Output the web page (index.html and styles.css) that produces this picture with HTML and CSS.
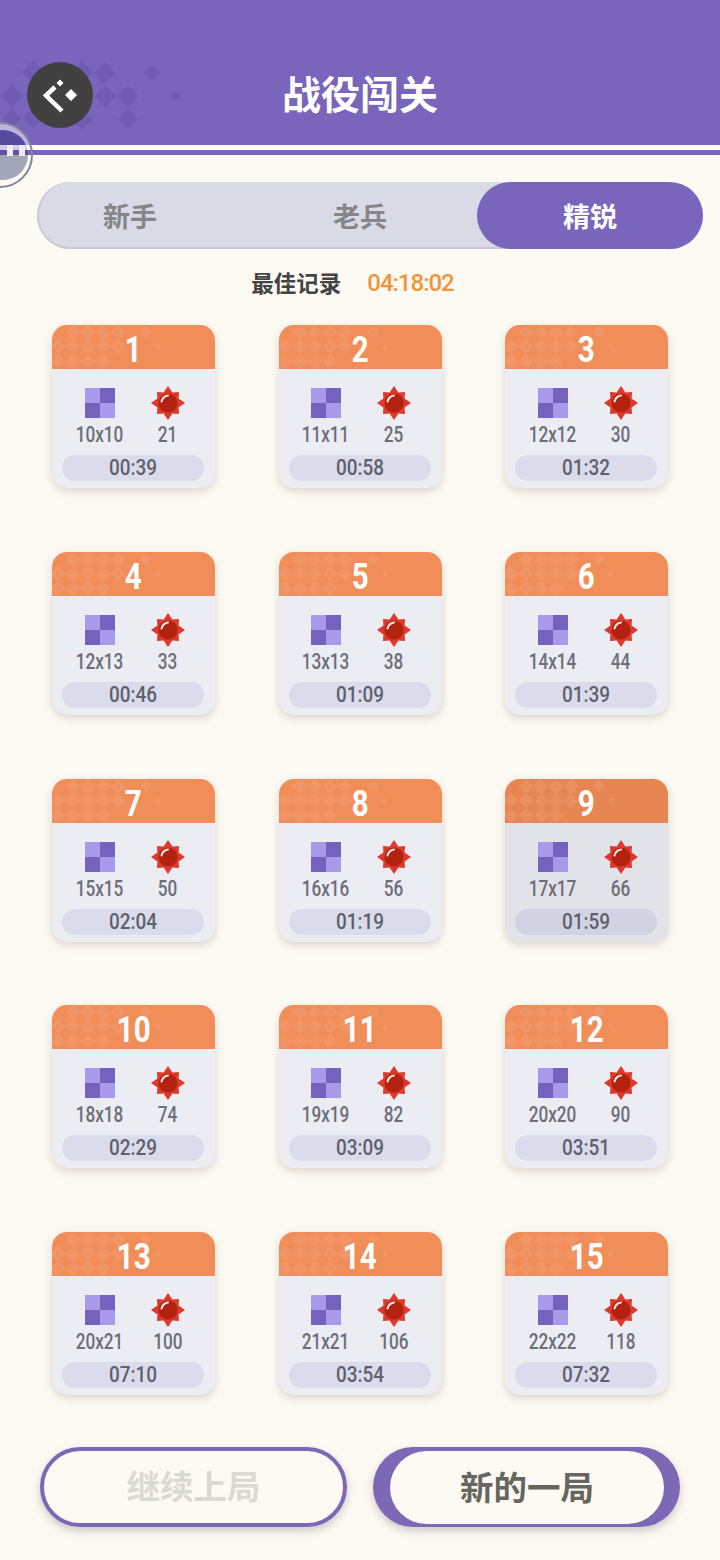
FILE: index.html
```html
<!DOCTYPE html>
<html lang="zh-CN">
<head>
    <meta charset="UTF-8">
    <meta name="viewport" content="width=device-width, initial-scale=1.0">
    <title>战役闯关</title>
    <link rel="stylesheet" href="styles.css">
</head>
<body>
    <svg class="defs" width="0" height="0">
        <symbol id="tile" viewBox="0 0 30 30">
            <rect width="30" height="30" fill="#a999ea"/>
            <rect x="15" width="15" height="15" fill="#7562bd"/>
            <rect y="15" width="15" height="15" fill="#7562bd"/>
        </symbol>
        <symbol id="mine" viewBox="0 0 34 34">
            <path d="M17 0L21.400 6.400 28 6 27.600 12.600 34 17 27.600 21.400 28 28 21.400 27.600 17 34 12.600 27.600 6 28 6.400 21.400 0 17 6.400 12.600 6 6 12.600 6.400z" fill="#dc3a2c"/>
            <circle cx="17" cy="17" r="9.500" fill="#b3210f"/>
            <path d="M10.500 15.500c.8-3 3.200-5.500 6.500-6" fill="none" stroke="#fff" stroke-opacity=".9" stroke-width="2" stroke-linecap="round"/>
        </symbol>
        <symbol id="dots" viewBox="0 0 163 44">
            <g fill="#fff" fill-opacity=".08">
                <path d="M21 0l7.500 7.500L21 15l-7.500-7.500zM36 0l7.500 7.500L36 15l-7.500-7.500zM51 0l7.500 7.500L51 15l-7.500-7.500zM66 0l7.500 7.500L66 15l-7.500-7.500zM94 1l6 6-6 6-6-6z"/>
                <path d="M6 14l7.500 7.500L6 29l-7.500-7.500zM21 14l7.500 7.500L21 29l-7.500-7.500zM36 14l7.500 7.500L36 29l-7.500-7.500zM51 14l7.500 7.500L51 29l-7.500-7.500zM66 14l7.500 7.500L66 29l-7.500-7.500z"/>
                <path d="M6 29l7.500 7.500L6 44l-7.500-7.500zM21 29l7.500 7.500L21 44l-7.500-7.500zM36 29l7.500 7.500L36 44l-7.500-7.500zM51 29l7.500 7.500L51 44l-7.500-7.500z"/>
                <path d="M106 19l3 3-3 3-3-3z"/>
            </g>
        </symbol>
    </svg>

    <header class="topbar">
        <svg class="topbar-dots" width="200" height="145" viewBox="0 0 200 145">
            <g fill="#705cb2">
                <path d="M33 61l11 11-11 11-11-11zM82 61l11 11-11 11-11-11zM105 62l11 11-11 11-11-11zM152 65l8 8-8 8-8-8z"/>
                <path d="M12 85l11 11-11 11-11-11zM105 85l11 11-11 11-11-11zM128 85l11 11-11 11-11-11zM175 91l5 5-5 5-5-5z"/>
                <path d="M12 108l10 10-10 10-10-10zM33 108l10 10-10 10-10-10zM82 110l10 10-10 10-10-10zM128 109l10 10-10 10-10-10z"/>
            </g>
        </svg>
        <button class="back-btn" type="button">
            <svg width="66" height="66" viewBox="0 0 66 66">
                <path d="M28 25l-9 8.500L35 49" fill="none" stroke="#fff" stroke-width="4.500"/>
                <path d="M33 17.500l3.500 3.500-3.500 3.500-3.500-3.500zM44 27l6 6-6 6-6-6z" fill="#fff"/>
            </svg>
        </button>
        <h1 class="title">战役闯关</h1>
    </header>
    <div class="topbar-rule"></div>

    <div class="float-ball">
        <span class="float-ball-core"></span>
        <span class="float-ball-marks"><i></i><i></i></span>
    </div>

    <main class="content">
        <nav class="tabs">
            <a class="tab">新手</a>
            <a class="tab">老兵</a>
            <a class="tab active">精锐</a>
        </nav>

        <p class="best"><span class="best-label">最佳记录</span><span class="best-time">04:18:02</span></p>

        <section class="levels">
            <article class="level">
                <div class="level-head"><svg class="level-dots"><use href="#dots"/></svg><span>1</span></div>
                <div class="level-stats">
                    <div class="stat"><svg class="stat-tile"><use href="#tile"/></svg><span>10x10</span></div>
                    <div class="stat"><svg class="stat-mine"><use href="#mine"/></svg><span>21</span></div>
                </div>
                <div class="level-time"><span>00:39</span></div>
            </article>
            <article class="level">
                <div class="level-head"><svg class="level-dots"><use href="#dots"/></svg><span>2</span></div>
                <div class="level-stats">
                    <div class="stat"><svg class="stat-tile"><use href="#tile"/></svg><span>11x11</span></div>
                    <div class="stat"><svg class="stat-mine"><use href="#mine"/></svg><span>25</span></div>
                </div>
                <div class="level-time"><span>00:58</span></div>
            </article>
            <article class="level">
                <div class="level-head"><svg class="level-dots"><use href="#dots"/></svg><span>3</span></div>
                <div class="level-stats">
                    <div class="stat"><svg class="stat-tile"><use href="#tile"/></svg><span>12x12</span></div>
                    <div class="stat"><svg class="stat-mine"><use href="#mine"/></svg><span>30</span></div>
                </div>
                <div class="level-time"><span>01:32</span></div>
            </article>
            <article class="level">
                <div class="level-head"><svg class="level-dots"><use href="#dots"/></svg><span>4</span></div>
                <div class="level-stats">
                    <div class="stat"><svg class="stat-tile"><use href="#tile"/></svg><span>12x13</span></div>
                    <div class="stat"><svg class="stat-mine"><use href="#mine"/></svg><span>33</span></div>
                </div>
                <div class="level-time"><span>00:46</span></div>
            </article>
            <article class="level">
                <div class="level-head"><svg class="level-dots"><use href="#dots"/></svg><span>5</span></div>
                <div class="level-stats">
                    <div class="stat"><svg class="stat-tile"><use href="#tile"/></svg><span>13x13</span></div>
                    <div class="stat"><svg class="stat-mine"><use href="#mine"/></svg><span>38</span></div>
                </div>
                <div class="level-time"><span>01:09</span></div>
            </article>
            <article class="level">
                <div class="level-head"><svg class="level-dots"><use href="#dots"/></svg><span>6</span></div>
                <div class="level-stats">
                    <div class="stat"><svg class="stat-tile"><use href="#tile"/></svg><span>14x14</span></div>
                    <div class="stat"><svg class="stat-mine"><use href="#mine"/></svg><span>44</span></div>
                </div>
                <div class="level-time"><span>01:39</span></div>
            </article>
            <article class="level">
                <div class="level-head"><svg class="level-dots"><use href="#dots"/></svg><span>7</span></div>
                <div class="level-stats">
                    <div class="stat"><svg class="stat-tile"><use href="#tile"/></svg><span>15x15</span></div>
                    <div class="stat"><svg class="stat-mine"><use href="#mine"/></svg><span>50</span></div>
                </div>
                <div class="level-time"><span>02:04</span></div>
            </article>
            <article class="level">
                <div class="level-head"><svg class="level-dots"><use href="#dots"/></svg><span>8</span></div>
                <div class="level-stats">
                    <div class="stat"><svg class="stat-tile"><use href="#tile"/></svg><span>16x16</span></div>
                    <div class="stat"><svg class="stat-mine"><use href="#mine"/></svg><span>56</span></div>
                </div>
                <div class="level-time"><span>01:19</span></div>
            </article>
            <article class="level pressed">
                <div class="level-head"><svg class="level-dots"><use href="#dots"/></svg><span>9</span></div>
                <div class="level-stats">
                    <div class="stat"><svg class="stat-tile"><use href="#tile"/></svg><span>17x17</span></div>
                    <div class="stat"><svg class="stat-mine"><use href="#mine"/></svg><span>66</span></div>
                </div>
                <div class="level-time"><span>01:59</span></div>
            </article>
            <article class="level">
                <div class="level-head"><svg class="level-dots"><use href="#dots"/></svg><span>10</span></div>
                <div class="level-stats">
                    <div class="stat"><svg class="stat-tile"><use href="#tile"/></svg><span>18x18</span></div>
                    <div class="stat"><svg class="stat-mine"><use href="#mine"/></svg><span>74</span></div>
                </div>
                <div class="level-time"><span>02:29</span></div>
            </article>
            <article class="level">
                <div class="level-head"><svg class="level-dots"><use href="#dots"/></svg><span>11</span></div>
                <div class="level-stats">
                    <div class="stat"><svg class="stat-tile"><use href="#tile"/></svg><span>19x19</span></div>
                    <div class="stat"><svg class="stat-mine"><use href="#mine"/></svg><span>82</span></div>
                </div>
                <div class="level-time"><span>03:09</span></div>
            </article>
            <article class="level">
                <div class="level-head"><svg class="level-dots"><use href="#dots"/></svg><span>12</span></div>
                <div class="level-stats">
                    <div class="stat"><svg class="stat-tile"><use href="#tile"/></svg><span>20x20</span></div>
                    <div class="stat"><svg class="stat-mine"><use href="#mine"/></svg><span>90</span></div>
                </div>
                <div class="level-time"><span>03:51</span></div>
            </article>
            <article class="level">
                <div class="level-head"><svg class="level-dots"><use href="#dots"/></svg><span>13</span></div>
                <div class="level-stats">
                    <div class="stat"><svg class="stat-tile"><use href="#tile"/></svg><span>20x21</span></div>
                    <div class="stat"><svg class="stat-mine"><use href="#mine"/></svg><span>100</span></div>
                </div>
                <div class="level-time"><span>07:10</span></div>
            </article>
            <article class="level">
                <div class="level-head"><svg class="level-dots"><use href="#dots"/></svg><span>14</span></div>
                <div class="level-stats">
                    <div class="stat"><svg class="stat-tile"><use href="#tile"/></svg><span>21x21</span></div>
                    <div class="stat"><svg class="stat-mine"><use href="#mine"/></svg><span>106</span></div>
                </div>
                <div class="level-time"><span>03:54</span></div>
            </article>
            <article class="level">
                <div class="level-head"><svg class="level-dots"><use href="#dots"/></svg><span>15</span></div>
                <div class="level-stats">
                    <div class="stat"><svg class="stat-tile"><use href="#tile"/></svg><span>22x22</span></div>
                    <div class="stat"><svg class="stat-mine"><use href="#mine"/></svg><span>118</span></div>
                </div>
                <div class="level-time"><span>07:32</span></div>
            </article>
        </section>

        <div class="actions">
            <button class="btn btn-continue" type="button">继续上局</button>
            <button class="btn btn-new" type="button"><span>新的一局</span></button>
        </div>
    </main>
</body>
</html>
```

FILE: styles.css
```css
* {
    box-sizing: border-box;
}
html, body {
    margin: 0;
    padding: 0;
}
body {
    position: relative;
    width: 720px;
    height: 1560px;
    overflow: hidden;
    background-color: #fdfaf3;
    font-family: Roboto, "Noto Sans CJK SC", sans-serif;
}
.defs {
    position: absolute;
}

/* top bar */
.topbar {
    position: relative;
    display: grid;
    grid-template-columns: 66px 1fr 66px;
    align-items: center;
    height: 145px;
    padding: 62px 27px 17px;
    background-color: #7965bb;
}
.topbar-dots {
    position: absolute;
    left: 0;
    top: 0;
}
.back-btn {
    position: relative;
    width: 66px;
    height: 66px;
    padding: 0;
    border: none;
    border-radius: 50%;
    background-color: #414141;
}
.back-btn svg {
    display: block;
}
.title {
    margin: 0 0 6px;
    color: #fff;
    font-family: "Noto Sans CJK SC", sans-serif;
    font-size: 39px;
    font-weight: 700;
    line-height: 60px;
    text-align: center;
}
.topbar-rule {
    height: 10px;
    border-top: 5px solid #fff;
    background-color: #7965bb;
}

/* floating ball on the left edge */
.float-ball {
    position: absolute;
    left: -33px;
    top: 122px;
    width: 66px;
    height: 66px;
    border: 2px solid #85859a;
    border-radius: 50%;
    background: linear-gradient(#bdb3e2 0 21px, transparent 21px);
}
.float-ball-core {
    position: absolute;
    left: 9px;
    top: 6px;
    width: 50px;
    height: 50px;
    border-radius: 50%;
    background: linear-gradient(#544a9e 0 15px, #cfcbe6 15px 20px, #5f50a2 20px 25px, #a3a6b6 25px);
}
.float-ball-marks {
    position: absolute;
    left: 38px;
    top: 21px;
    display: flex;
    gap: 6px;
}
.float-ball-marks i {
    width: 6px;
    height: 11px;
    background-color: #efedf7;
}

/* content */
.content {
    padding: 27px 17px 0 37px;
}
.tabs {
    display: grid;
    grid-template-columns: 186px 254px 226px;
    height: 67px;
    border-radius: 34px;
    background-color: #d9dae6;
    box-shadow: inset 0 -2px 0 #c9cadb, inset 2px 0 0 #c9cadb;
}
.tab {
    display: flex;
    align-items: center;
    justify-content: center;
    border-radius: 34px;
    color: #85858a;
    font-family: "Noto Sans CJK SC", sans-serif;
    font-size: 27px;
    font-weight: 700;
}
.tab:nth-child(2) {
    padding-left: 20px;
}
.tab.active {
    background-color: #7965bb;
    color: #fff;
}
.best {
    display: flex;
    justify-content: center;
    align-items: center;
    gap: 26px;
    margin: 18px 35px 0 0;
    line-height: 33px;
}
.best-label {
    margin-top: -3px;
    color: #444;
    font-family: "Noto Sans CJK SC", sans-serif;
    font-size: 22.500px;
    font-weight: 700;
}
.best-time {
    color: #f0953a;
    font-size: 24px;
    font-weight: 500;
    letter-spacing: -1px;
}

/* level cards */
.levels {
    display: grid;
    grid-template-columns: repeat(3, 163px);
    grid-auto-rows: 163px;
    column-gap: 63.500px;
    row-gap: 63.750px;
    margin: 25px 0 0 15px;
}
.level {
    display: flex;
    flex-direction: column;
    overflow: hidden;
    border-radius: 15px;
    background-color: #ecedf3;
    box-shadow: 0 3px 8px rgba(90, 80, 70, .22);
}
.level-head {
    position: relative;
    height: 44px;
    background-color: #f18d59;
    color: #fff;
    font-size: 36px;
    font-weight: 700;
    line-height: 50px;
    text-align: center;
}
.level-head span {
    position: relative;
    display: inline-block;
    transform: scaleX(.82);
}
.level-dots {
    position: absolute;
    left: 0;
    top: 0;
    width: 163px;
    height: 44px;
}
.level-stats {
    display: grid;
    grid-template-columns: 68px 68px;
    justify-content: center;
    height: 85px;
    padding-top: 17px;
}
.stat {
    display: flex;
    flex-direction: column;
    align-items: center;
    color: #6d6e78;
    font-size: 22px;
    font-weight: 500;
    line-height: 33px;
    white-space: nowrap;
}
.stat span {
    display: inline-block;
    transform: scaleX(.78);
}
.stat svg {
    display: block;
}
.stat-tile {
    width: 30px;
    height: 30px;
    margin: 2px 0 0;
}
.stat-mine {
    width: 34px;
    height: 34px;
    margin-bottom: -2px;
}
.level-time {
    height: 26px;
    margin: 1px 11px 0 10px;
    border-radius: 13px;
    background-color: #dadcec;
    color: #5f606e;
    font-size: 22px;
    font-weight: 500;
    line-height: 25px;
    text-align: center;
}
.level-time span {
    display: inline-block;
    transform: scaleX(.86);
}
.level.pressed {
    background-color: #e2e3e9;
}
.level.pressed .level-head {
    background-color: #e88653;
}
.level.pressed .level-time {
    background-color: #d1d3e2;
}

/* bottom buttons */
.actions {
    display: flex;
    gap: 26px;
    margin: 52px 0 0 3px;
}
.btn {
    width: 307px;
    height: 80px;
    padding: 0 0 5px;
    border-radius: 40px;
    font-family: "Noto Sans CJK SC", sans-serif;
    font-size: 33.500px;
    font-weight: 700;
    box-shadow: 0 4px 8px rgba(60, 50, 80, .25);
}
.btn-continue {
    border: 4px solid #7d68b5;
    background-color: #fdfaf3;
    color: #dbd9d3;
}
.btn-new {
    display: flex;
    justify-content: center;
    border: none;
    padding: 4px 16px 3px 17px;
    background-color: #7d68b5;
    color: #66665f;
}
.btn-new span {
    display: flex;
    align-items: center;
    justify-content: center;
    width: 100%;
    padding-bottom: 5px;
    border-radius: 37px;
    background-color: #fdfaf3;
}
```
